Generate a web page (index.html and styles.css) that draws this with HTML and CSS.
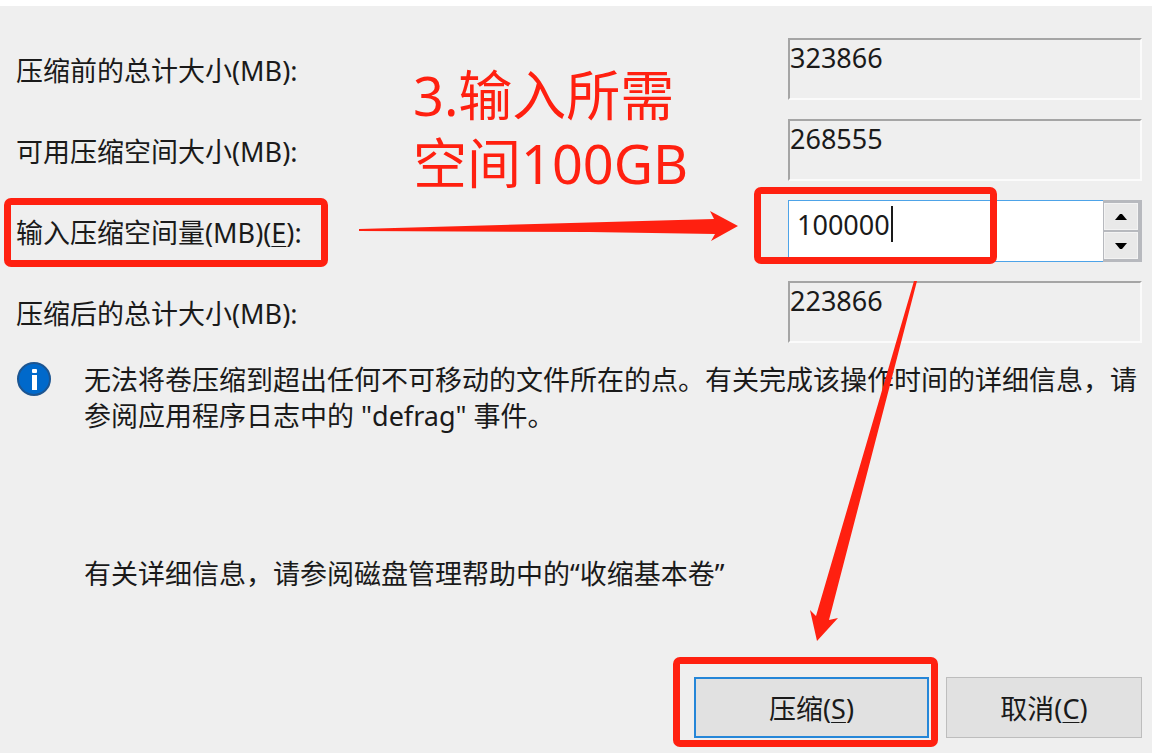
FILE: index.html
```
<!DOCTYPE html>
<html lang="zh-CN">
<head>
    <meta charset="UTF-8">
    <meta name="viewport" content="width=device-width, initial-scale=1.0">
    <title>压缩</title>
    <link rel="stylesheet" href="styles.css">
</head>
<body>
    <form class="dialog">
        <div class="fields">
            <div class="field">
                <label class="field-label" for="total">压缩前的总计大小(MB):</label>
                <input type="text" class="field-value" id="total" value="323866" readonly>
            </div>
            <div class="field">
                <label class="field-label" for="available">可用压缩空间大小(MB):</label>
                <input type="text" class="field-value" id="available" value="268555" readonly>
            </div>
            <div class="field">
                <label class="field-label" for="amount">输入压缩空间量(MB)(<u>E</u>):<span class="mark mark-label"></span></label>
                <div class="spinner">
                    <input type="text" class="spinner-input" id="amount" value="100000" accesskey="e">
                    <span class="caret"></span>
                    <div class="spinner-buttons">
                        <button type="button" class="spinner-button" aria-label="增加">
                            <svg width="12" height="6" viewBox="0 0 12 6"><path d="M0 6 L5 0 H7 L12 6 Z"/></svg>
                        </button>
                        <button type="button" class="spinner-button" aria-label="减少">
                            <svg width="12" height="6" viewBox="0 0 12 6"><path d="M0 0 L5 6 H7 L12 0 Z"/></svg>
                        </button>
                    </div>
                    <span class="mark mark-input"></span>
                </div>
            </div>
            <div class="field">
                <label class="field-label" for="after">压缩后的总计大小(MB):</label>
                <input type="text" class="field-value" id="after" value="223866" readonly>
            </div>
        </div>

        <div class="note">
            <svg class="note-icon" width="36" height="36" viewBox="0 0 36 36">
                <circle cx="18" cy="17" r="16" fill="#0069cb" stroke="#1c5591" stroke-width="2"/>
                <rect x="16" y="7" width="5" height="4" rx="1" fill="#fff"/>
                <rect x="16" y="13" width="5" height="15" fill="#fff"/>
            </svg>
            <p class="note-text">无法将卷压缩到超出任何不可移动的文件所在的点。有关完成该操作时间的详细信息，请参阅应用程序日志中的 "defrag" 事件。</p>
        </div>

        <p class="help">有关详细信息，请参阅磁盘管理帮助中的“收缩基本卷”</p>

        <div class="actions">
            <button type="button" class="button button-default" accesskey="s">压缩(<u>S</u>)<span class="mark mark-button"></span></button>
            <button type="button" class="button" accesskey="c">取消(<u>C</u>)</button>
        </div>

        <!-- tutorial annotations -->
        <p class="step">3.输入所需<br>空间100GB</p>
        <svg class="arrow arrow-right" width="380" height="32" viewBox="0 0 380 32">
            <path d="M0 19 L355 9 L351 1 L379 16 L352 31 L356 24 L230 22 L0 21 Z"/>
        </svg>
        <svg class="arrow arrow-down" width="110" height="360" viewBox="0 0 110 360">
            <path d="M106 0 H109 L21 339 L30 337 L9 360 L2 329 L8 335 Z"/>
        </svg>
    </form>
</body>
</html>
```

FILE: styles.css
```
* {
    margin: 0;
    padding: 0;
    box-sizing: border-box;
}

body {
    min-height: 100vh;
    padding: 6px 3px 0 0;
    display: flex;
    background: #fff;
    color: #1a1a1a;
    font-family: "Noto Sans", "Noto Sans CJK SC", sans-serif;
    font-size: 27px;
    line-height: 36px;
}

input,
button {
    font: inherit;
    color: inherit;
    border-radius: 0;
    outline: none;
}

u {
    text-decoration-thickness: 1px;
    text-underline-offset: 3px;
}

.dialog {
    position: relative;
    flex: 1;
    padding: 32px 10px 14px 16px;
    background: #efefef;
}

.fields {
    display: grid;
    gap: 19px;
}

.field {
    display: flex;
    justify-content: space-between;
    align-items: center;
    height: 62px;
}

.field-label {
    position: relative;
    padding-top: 3px;
}

.field-value {
    width: 354px;
    height: 62px;
    padding: 0 0 24px;
    background: #efefef;
    border: 2px solid;
    border-color: #a5a5a5 #fbfbfb #fbfbfb #a5a5a5;
}

.spinner {
    position: relative;
    display: flex;
    width: 354px;
    height: 62px;
}

.spinner-input {
    flex: 1;
    min-width: 0;
    padding: 0 0 12px 8px;
    background: #fff;
    border: 1px solid #4da3e8;
    border-right: none;
}

.caret {
    position: absolute;
    top: 6px;
    left: 103px;
    width: 2px;
    height: 36px;
    background: #1a1a1a;
}

.spinner-buttons {
    display: flex;
    flex-direction: column;
    gap: 2px;
    width: 39px;
    padding: 3px 4px 3px 1px;
    background: #b7b9be;
}

.spinner-button {
    flex: 1;
    display: flex;
    justify-content: center;
    align-items: center;
    background: #e9e9e9;
    border: 1px solid #f3f3f3;
}

.note {
    display: flex;
    align-items: flex-start;
    gap: 32px;
    margin-top: 19px;
}

.note-icon {
    flex: none;
}

.note-text {
    flex: 1;
}

.help {
    margin-top: 122px;
    padding-left: 68px;
}

.actions {
    display: flex;
    justify-content: flex-end;
    gap: 17px;
    margin-top: 85px;
}

.button {
    position: relative;
    width: 196px;
    height: 61px;
    padding-top: 2px;
    background: #e1e1e1;
    border: 1px solid #bdbdbd;
}

.button-default {
    width: 235px;
    border: 2px solid #2586d8;
}

.mark {
    position: absolute;
    border: 7px solid #ff2010;
    border-radius: 7px;
    pointer-events: none;
}

.mark-label {
    inset: -14px -26px -16px -12px;
}

.mark-input {
    top: -13px;
    left: -34px;
    width: 243px;
    height: 77px;
}

.mark-button {
    inset: -22px -11px -11px -23px;
}

.step {
    position: absolute;
    top: 55px;
    left: 413px;
    color: #ff2010;
    font-size: 54px;
    line-height: 68px;
}

.arrow {
    position: absolute;
    fill: #ff2010;
    pointer-events: none;
}

.arrow-right {
    top: 204px;
    left: 359px;
}

.arrow-down {
    top: 275px;
    right: 234px;
}
```
